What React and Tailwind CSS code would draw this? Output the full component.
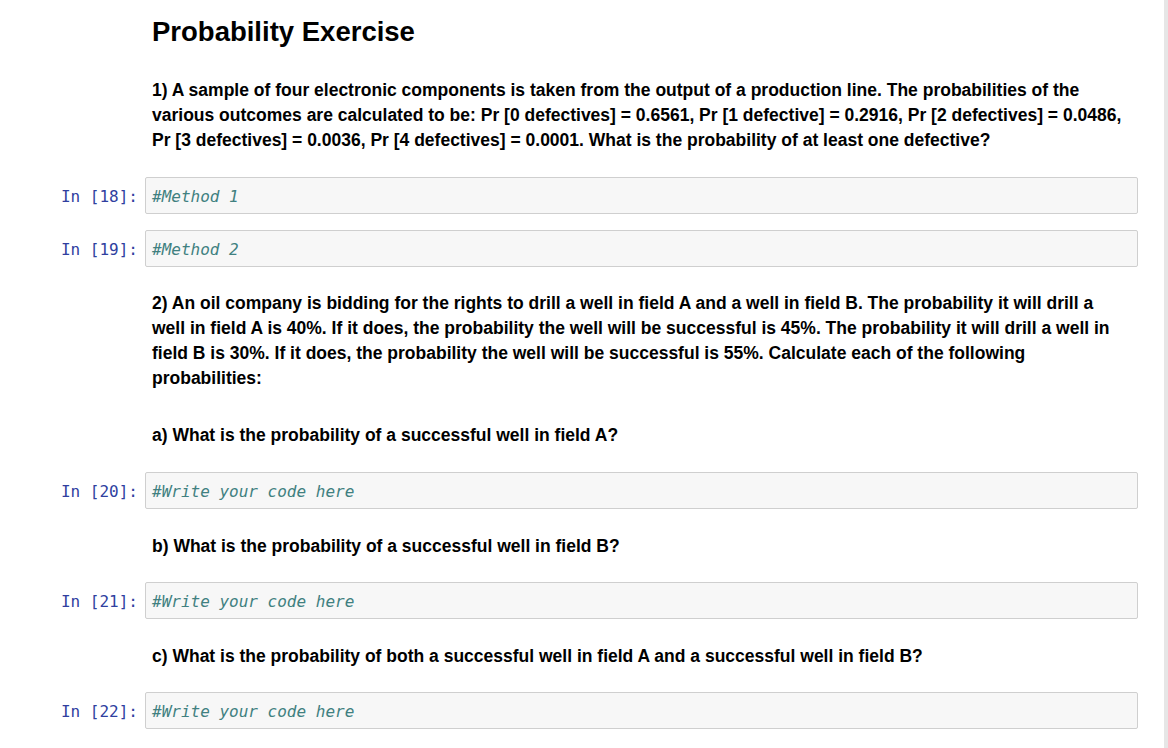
const sans = { fontFamily: '"Liberation Sans", Arial, sans-serif' };

function Markdown({ children, className = "" }) {
  return (
    <div className={`flex ${className}`}>
      <div className="w-[145px] shrink-0" />
      <div className="pl-[7px] whitespace-nowrap text-[17.5px] leading-[25px] font-bold text-black font-['Liberation_Sans',Arial,sans-serif]">
        {children}
      </div>
    </div>
  );
}

function CodeCell({ n, code, className = "" }) {
  return (
    <div className={`flex items-center font-['DejaVu_Sans_Mono','Liberation_Mono',monospace] text-[16px] ${className}`}>
      <div className="w-[145px] shrink-0 pr-[7px] pt-[3px] text-right text-[#303f9f]">In [{n}]:</div>
      <div className="w-[993px] h-[37px] flex items-center pl-[6px] pt-[2px] bg-[#f7f7f7] border border-[#cfcfcf] rounded-[2px]">
        <span className="italic text-[#408080]">{code}</span>
      </div>
    </div>
  );
}

export default function App() {
  return (
    <div className="flex w-full min-h-[748px] bg-white" style={sans}>
      <div className="flex-1">
        <Markdown className="pt-[15px]">
          <h1 className="text-[27.5px] leading-[34px] font-bold">Probability Exercise</h1>
        </Markdown>

        <Markdown className="mt-[29px]">
          <p>
            1) A sample of four electronic components is taken from the output of a production line. The probabilities of the
            <br />
            various outcomes are calculated to be: Pr [0 defectives] = 0.6561, Pr [1 defective] = 0.2916, Pr [2 defectives] = 0.0486,
            <br />
            Pr [3 defectives] = 0.0036, Pr [4 defectives] = 0.0001. What is the probability of at least one defective?
          </p>
        </Markdown>

        <CodeCell n="18" code="#Method 1" className="mt-[24px]" />
        <CodeCell n="19" code="#Method 2" className="mt-[16px]" />

        <Markdown className="mt-[24px]">
          <p>
            2) An oil company is bidding for the rights to drill a well in field A and a well in field B. The probability it will drill a
            <br />
            well in field A is 40%. If it does, the probability the well will be successful is 45%. The probability it will drill a well in
            <br />
            field B is 30%. If it does, the probability the well will be successful is 55%. Calculate each of the following
            <br />
            probabilities:
          </p>
        </Markdown>

        <Markdown className="mt-[32px]">
          <p>a) What is the probability of a successful well in field A?</p>
        </Markdown>
        <CodeCell n="20" code="#Write your code here" className="mt-[24px]" />

        <Markdown className="mt-[25px]">
          <p>b) What is the probability of a successful well in field B?</p>
        </Markdown>
        <CodeCell n="21" code="#Write your code here" className="mt-[23px]" />

        <Markdown className="mt-[25px]">
          <p>c) What is the probability of both a successful well in field A and a successful well in field B?</p>
        </Markdown>
        <CodeCell n="22" code="#Write your code here" className="mt-[23px]" />
      </div>
      <div className="w-[4px] shrink-0 bg-[#e6e6e6]" />
    </div>
  );
}
